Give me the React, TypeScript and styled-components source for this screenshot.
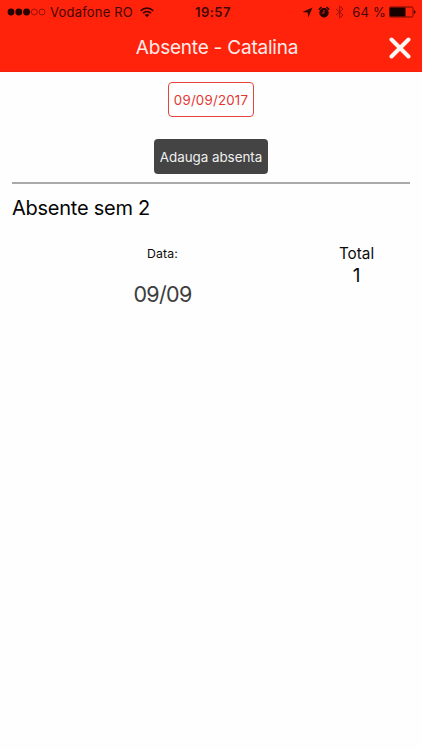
import React from "react";
import styled, { createGlobalStyle } from "styled-components";

const GlobalStyle = createGlobalStyle`
  * { box-sizing: border-box; }
  body {
    margin: 0;
    background: #fefefe;
    color: #0c0c0c;
    font-family: Inter, "Liberation Sans", sans-serif;
  }
  button { font-family: inherit; padding: 0; }
`;

const Screen = styled.div`
  width: 100%;
  height: 750px;
  display: flex;
  flex-direction: column;
  overflow: hidden;
`;

const Header = styled.header`
  height: 72px;
  flex: none;
  background: #ff230c;
  border-bottom: 1px solid #f5200b;
`;

const StatusBar = styled.div`
  height: 24px;
  display: grid;
  grid-template-columns: 188px 38px 1fr;
  align-items: center;
  padding: 0 6px 0 7px;
  color: #450701;
`;

const StatusGroup = styled.div<{ $end?: boolean }>`
  display: flex;
  align-items: center;
  justify-content: ${(p) => (p.$end ? "flex-end" : "flex-start")};
  height: 24px;
  svg { flex: none; display: block; }
`;

const StatusText = styled.span<{ $bold?: boolean }>`
  font-size: 13px;
  line-height: 24px;
  font-weight: ${(p) => (p.$bold ? 600 : 400)};
  letter-spacing: ${(p) => (p.$bold ? 0.45 : 0.2)}px;
  white-space: nowrap;
`;

const Carrier = styled(StatusText)`
  margin: 0 7px 0 4px;
`;

const Battery = styled(StatusText)`
  margin: 0 3px 0 8px;
`;

const StatusIcons = styled.span`
  display: flex;
  align-items: center;
  gap: 5px;
`;

const TitleBar = styled.div`
  height: 47px;
  display: grid;
  grid-template-columns: 44px 1fr 44px;
  align-items: center;
`;

const Title = styled.h1`
  grid-column: 2;
  margin: 0 0 0 12px;
  text-align: center;
  color: #ffebe8;
  font-size: 19px;
  line-height: 24px;
  font-weight: 400;
  letter-spacing: -0.22px;
`;

const CloseButton = styled.button`
  border: 0;
  background: none;
  width: 22px;
  height: 22px;
  justify-self: center;
  svg { display: block; }
`;

const Actions = styled.div`
  height: 110px;
  margin: 0 12px;
  padding-top: 10px;
  display: flex;
  flex-direction: column;
  align-items: center;
  gap: 22px;
`;

const DateButton = styled.button`
  width: 86px;
  height: 35px;
  border: 1px solid #e5443d;
  border-radius: 4px;
  background: #fefefe;
  color: #e53630;
  font-size: 13.3px;
  letter-spacing: 0.2px;
  white-space: nowrap;
`;

const AddButton = styled.button`
  width: 114px;
  height: 35px;
  border: 0;
  border-radius: 4px;
  background: #444;
  color: #f0f0f0;
  font-size: 13.4px;
  letter-spacing: -0.03px;
  white-space: nowrap;
`;

const Divider = styled.hr`
  width: 398px;
  height: 2px;
  margin: 0 12px;
  border: 0;
  background: #aaa;
`;

const SectionTitle = styled.h2`
  margin: 12px 12px 0;
  font-size: 20px;
  line-height: 24px;
  font-weight: 400;
  letter-spacing: -0.25px;
  color: #050505;
`;

const Summary = styled.section`
  display: grid;
  grid-template-columns: 301px 87px;
  margin: 24px 12px 0;
`;

const Column = styled.div`
  display: flex;
  flex-direction: column;
  align-items: center;
`;

const DateLabel = styled.span`
  font-size: 12.3px;
  line-height: 20px;
  letter-spacing: 0.1px;
`;

const DateValue = styled.span`
  margin-top: 16px;
  font-size: 21.5px;
  line-height: 28px;
  letter-spacing: -0.7px;
  color: #3d3d3d;
`;

const TotalLabel = styled.span`
  font-size: 15.3px;
  line-height: 20px;
`;

const TotalValue = styled.span`
  font-size: 19px;
  line-height: 24px;
`;

const SignalDots = () => (
  <svg width="39" height="10" viewBox="0 0 39 10">
    {[4, 11.8, 19.6].map((x) => (
      <circle key={x} cx={x} cy="5" r="3.4" fill="#240300" />
    ))}
    {[27.3, 35].map((x) => (
      <circle key={x} cx={x} cy="5" r="3" fill="none" stroke="#7c0d04" strokeWidth="0.8" />
    ))}
  </svg>
);

const WifiIcon = () => (
  <svg width="14" height="11" viewBox="0 0 14 11" fill="none" stroke="#350500" strokeWidth="1.7">
    <path d="M.7 3.8C4.3.3 9.7.3 13.3 3.8M3 6.2C5.3 4 8.7 4 11 6.2" />
    <path d="M4.7 7.9C6 6.7 8 6.7 9.3 7.9L7 10.3Z" fill="#350500" stroke="none" />
  </svg>
);

const LocationIcon = () => (
  <svg width="11" height="11" viewBox="0 0 11 11">
    <path d="M10.5.5 6.3 10.5 5.7 5.5.5 5Z" fill="#350500" />
  </svg>
);

const AlarmIcon = () => (
  <svg width="12" height="13" viewBox="0 0 12 13">
    <circle cx="6" cy="6.8" r="4.7" fill="#240300" />
    <path d="M.8 3.6 3.5 1.1M11.2 3.6 8.5 1.1" stroke="#350500" strokeWidth="1.6" />
    <path d="M6 3.9v3.2H3.8" fill="none" stroke="#ff230c" strokeWidth="0.9" />
  </svg>
);

const BluetoothIcon = () => (
  <svg width="9" height="14" viewBox="0 0 9 14">
    <path d="M1 4 8 10 4.6 13V1L8 4 1 10" fill="none" stroke="#9b1005" />
  </svg>
);

const BatteryIcon = () => (
  <svg width="27" height="12" viewBox="0 0 27 12">
    <rect x=".5" y="1" width="23.5" height="10" rx="1.2" fill="none" stroke="#710b03" />
    <rect x="1" y="1.5" width="15.5" height="9" fill="#180200" />
    <path d="M25 4.2c2 .4 2 3.2 0 3.6Z" fill="#350500" />
  </svg>
);

const CloseIcon = () => (
  <svg width="22" height="22" viewBox="0 0 22 22">
    <path d="M2.5 2.5 19.5 19.5M19.5 2.5 2.5 19.5" stroke="#fff5f3" strokeWidth="4" strokeLinecap="round" />
  </svg>
);

export default function App() {
  return (
    <Screen>
      <GlobalStyle />
      <Header>
        <StatusBar>
          <StatusGroup>
            <SignalDots />
            <Carrier>Vodafone RO</Carrier>
            <WifiIcon />
          </StatusGroup>
          <StatusText $bold>19:57</StatusText>
          <StatusGroup $end>
            <StatusIcons>
              <LocationIcon />
              <AlarmIcon />
              <BluetoothIcon />
            </StatusIcons>
            <Battery>64 %</Battery>
            <BatteryIcon />
          </StatusGroup>
        </StatusBar>
        <TitleBar>
          <Title>Absente - Catalina</Title>
          <CloseButton aria-label="Close">
            <CloseIcon />
          </CloseButton>
        </TitleBar>
      </Header>
      <Actions>
        <DateButton>09/09/2017</DateButton>
        <AddButton>Adauga absenta</AddButton>
      </Actions>
      <Divider />
      <SectionTitle>Absente sem 2</SectionTitle>
      <Summary>
        <Column>
          <DateLabel>Data:</DateLabel>
          <DateValue>09/09</DateValue>
        </Column>
        <Column>
          <TotalLabel>Total</TotalLabel>
          <TotalValue>1</TotalValue>
        </Column>
      </Summary>
    </Screen>
  );
}
